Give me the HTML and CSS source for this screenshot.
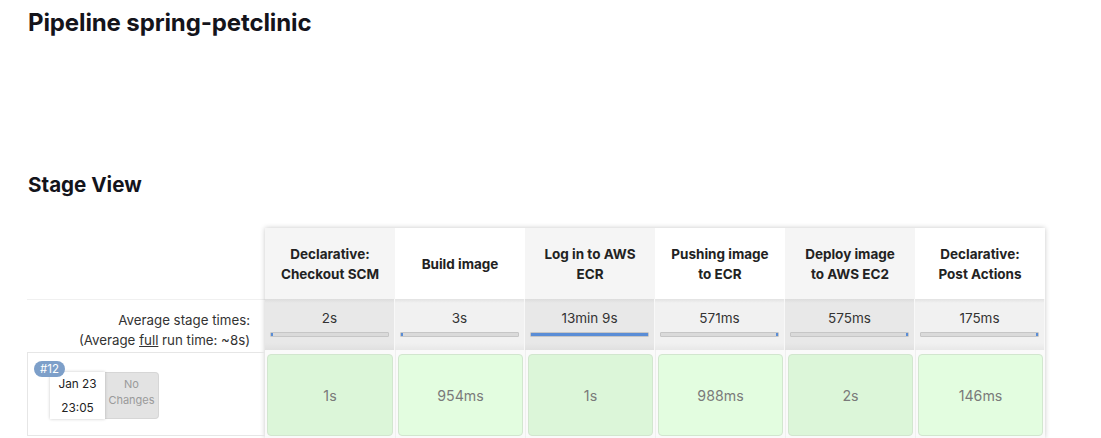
FILE: index.html
```html
<!DOCTYPE html>
<html>
<head>
<meta charset="utf-8">
<title>Pipeline spring-petclinic</title>
<link rel="stylesheet" href="styles.css">
</head>
<body>
<div class="page">
  <h1 class="title">Pipeline spring-petclinic</h1>
  <h2 class="subtitle">Stage View</h2>

  <div class="stage-view">
    <div class="left-col">
      <div class="corner"></div>
      <div class="avg-label">
        <div>Average stage times:</div>
        <div>(Average <u>full</u> run time: ~8s)</div>
      </div>
      <div class="run-info">
        <span class="badge">#12</span>
        <div class="date-box">
          <div>Jan 23</div>
          <div>23:05</div>
        </div>
        <div class="changes-box">No<br>Changes</div>
      </div>
    </div>

    <div class="stages">
      <div class="row header-row">
        <div class="head odd">Declarative:<br>Checkout SCM</div>
        <div class="head">Build image</div>
        <div class="head odd">Log in to AWS<br>ECR</div>
        <div class="head">Pushing image<br>to ECR</div>
        <div class="head odd">Deploy image<br>to AWS EC2</div>
        <div class="head">Declarative:<br>Post Actions</div>
      </div>
      <div class="row avg-row">
        <div class="avg odd"><div class="avg-time">2s</div><div class="bar"><span class="fill" style="width:2px"></span></div></div>
        <div class="avg"><div class="avg-time">3s</div><div class="bar"><span class="fill" style="width:2px"></span></div></div>
        <div class="avg odd"><div class="avg-time">13min 9s</div><div class="bar"><span class="fill" style="width:100%"></span></div></div>
        <div class="avg"><div class="avg-time">571ms</div><div class="bar bar-end"><span class="fill" style="width:2px"></span></div></div>
        <div class="avg odd"><div class="avg-time">575ms</div><div class="bar bar-end"><span class="fill" style="width:2px"></span></div></div>
        <div class="avg"><div class="avg-time">175ms</div><div class="bar bar-end"><span class="fill" style="width:2px"></span></div></div>
      </div>
      <div class="row run-row">
        <div class="slot odd"><div class="cell">1s</div></div>
        <div class="slot"><div class="cell">954ms</div></div>
        <div class="slot odd"><div class="cell">1s</div></div>
        <div class="slot"><div class="cell">988ms</div></div>
        <div class="slot odd"><div class="cell">2s</div></div>
        <div class="slot"><div class="cell">146ms</div></div>
      </div>
    </div>
  </div>
</div>
</body>
</html>
```

FILE: styles.css
```css
html, body {
  margin: 0;
  padding: 0;
  background: #fff;
}

body {
  font-family: Inter, "Noto Sans", "DejaVu Sans", sans-serif;
  color: #1f1f24;
  overflow: hidden;
}

.page {
  padding-left: 27px;
}

.title {
  margin: 8px 0 0 1px;
  font-size: 24px;
  line-height: 30px;
  font-weight: 700;
  letter-spacing: -0.12px;
  color: #14141b;
}

.subtitle {
  margin: 135px 0 0 1px;
  font-size: 20.6px;
  line-height: 24px;
  font-weight: 700;
  color: #14141b;
}

.stage-view {
  display: flex;
  margin-top: 31px;
  font-size: 14px;
  color: #333;
}

/* left column */
.left-col {
  width: 238px;
  display: flex;
  flex-direction: column;
}

.corner {
  height: 71px;
}

.avg-label {
  height: 51px;
  box-sizing: border-box;
  padding: 10px 15px 0 0;
  text-align: right;
  font-size: 13.3px;
  line-height: 20px;
  color: #333;
  border-top: 1px solid #f0f0f0;
}

.avg-label u {
  text-decoration: underline;
}

.run-info {
  position: relative;
  margin-top: 2px;
  height: 84px;
  box-sizing: border-box;
  border: 1px solid #e6e6e6;
  border-right: none;
  padding: 19px 0 0 22px;
  display: flex;
  align-items: flex-start;
}

.badge {
  position: absolute;
  left: 6px;
  top: 8px;
  z-index: 2;
  height: 16px;
  padding: 0 6px;
  border-radius: 8px;
  background: #7d9fc9;
  color: #fff;
  font-size: 11.5px;
  line-height: 16px;
}

.date-box {
  width: 55px;
  height: 47px;
  background: #fff;
  box-shadow: 0 0 3px rgba(0, 0, 0, 0.22);
  text-align: center;
  font-size: 11.8px;
  line-height: 24px;
  color: #222;
  position: relative;
  z-index: 1;
}

.changes-box {
  width: 54px;
  height: 47px;
  box-sizing: border-box;
  padding-top: 3px;
  background: #e3e3e3;
  border: 1px solid #d6d6d6;
  border-left: none;
  border-radius: 0 4px 4px 0;
  text-align: center;
  font-size: 11px;
  line-height: 16px;
  color: #9a9a9a;
}

/* stage columns */
.stages {
  width: 780px;
  box-shadow: 0 0 5px rgba(0, 0, 0, 0.22);
  background: #f7f7f7;
}

.row {
  display: grid;
  grid-template-columns: repeat(6, 130px);
}

.header-row {
  height: 71px;
}

.head {
  display: flex;
  align-items: center;
  justify-content: center;
  text-align: center;
  font-size: 13.5px;
  font-weight: 700;
  line-height: 20px;
  color: #222;
  background: #fff;
}

.head.odd {
  background: #f5f5f5;
}

.avg-row {
  height: 51px;
}

.avg {
  box-sizing: border-box;
  padding-top: 9px;
  text-align: center;
  background: linear-gradient(#e2e2e2 0, #f1f1f1 4px, #f1f1f1 44px, #e8e8e8 100%);
  border-right: 1px solid #f8f8f8;
}

.avg.odd {
  background: linear-gradient(#dcdcdc 0, #e8e8e8 4px, #e8e8e8 44px, #e0e0e0 100%);
}

.avg-time {
  font-size: 13.5px;
  line-height: 20px;
  color: #333;
}

.bar {
  display: flex;
  width: 117px;
  height: 3px;
  margin: 4px auto 0;
  background: #dadada;
  border: 1px solid #c6c6c6;
  border-radius: 1px;
}

.bar-end {
  justify-content: flex-end;
}

.fill {
  display: block;
  height: 100%;
  background: #5a8dd6;
}

.run-row {
  height: 88px;
  background: #fafafa;
}

.slot {
  padding: 4px 2px 2px;
  border-left: 1px solid #f0f0f0;
  box-sizing: border-box;
}

.slot:first-child {
  border-left: none;
}

.cell {
  height: 82px;
  box-sizing: border-box;
  display: flex;
  align-items: center;
  justify-content: center;
  background: #e3fde0;
  border: 1px solid #d2e6cf;
  border-radius: 4px;
  font-size: 14.2px;
  color: #7a7a7a;
}

.slot.odd .cell {
  background: #dcf6d9;
}
```
